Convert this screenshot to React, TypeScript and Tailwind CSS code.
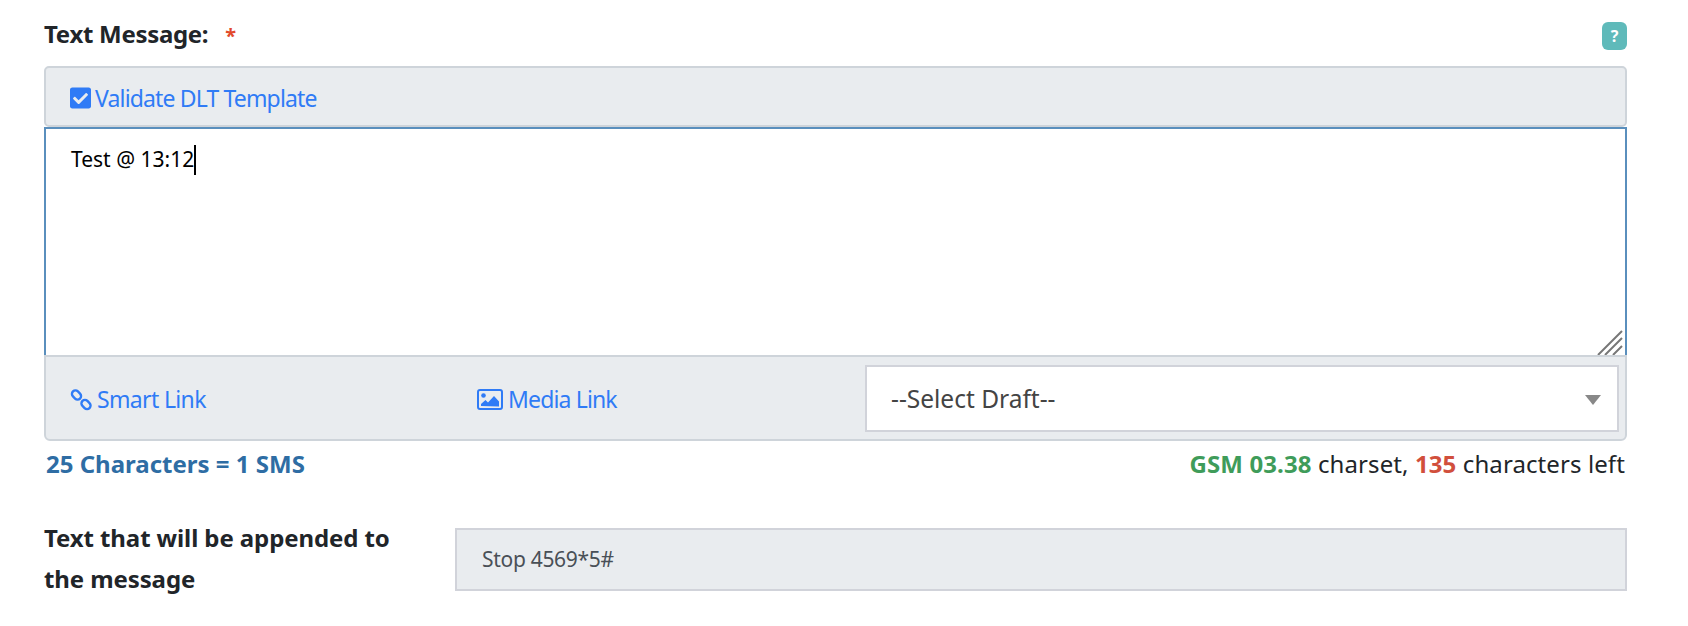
import { FaCheckSquare } from "react-icons/fa";

const App = () => {
  return (
    <div className="w-[1688px] h-[626px] overflow-hidden bg-white pl-[44px] pr-[61px] pt-[18px] font-['Noto_Sans',sans-serif] text-[23px] text-[#212529]">
      {/* label row */}
      <div className="flex items-center justify-between h-[32px] mb-[16px]">
        <label className="font-bold text-[24px] tracking-[-0.3px]">
          Text Message:<span className="ml-[17px] text-[20px] text-[#e2492b]">*</span>
        </label>
        <span className="flex items-center justify-center w-[25px] h-[28px] mt-[4px] rounded-[6px] bg-[#5fbaba] text-white text-[16px] font-bold">?</span>
      </div>

      {/* message box */}
      <div className="h-[61px] flex items-center pl-[24px] pt-[3px] bg-[#e9ecef] border-2 border-[#ced4da] rounded-[5px] text-[#2f7bf6] tracking-[-0.85px]">
        <FaCheckSquare className="w-[21px] h-[24px] mr-[4px]" />
        Validate DLT Template
      </div>
      <div className="relative h-[228px] bg-white border-2 border-b-0 border-[#5a8fbd] pl-[25px] pt-[15px] text-[21px] text-black">
        <span className="inline-flex items-center h-[30px]">
          Test @ 13:12
          <span className="inline-block w-[2px] h-[30px] bg-black" />
        </span>
        <svg className="absolute right-[2px] bottom-0 w-[26px] h-[26px]" viewBox="0 0 26 26" stroke="#777" strokeWidth="2">
          <path d="M1 26 25 2M8 26 25 9M16 26 25 17" />
        </svg>
      </div>
      <div className="h-[86px] flex items-center pl-[24px] pr-[6px] bg-[#e9ecef] border-2 border-[#ced4da] rounded-b-[6px] text-[#2f7bf6] tracking-[-0.85px]">
        <div className="w-[407px] flex items-center pt-[3px] tracking-[-0.65px]">
          <svg className="w-[24px] h-[24px] mr-[3px]" viewBox="0 0 24 24" fill="none" stroke="currentColor" strokeWidth="2.4">
            <rect x="1.5" y="3.5" width="10" height="7" rx="3.5" transform="rotate(45 6.5 7)" />
            <rect x="11" y="13" width="10" height="7" rx="3.5" transform="rotate(45 16 16.5)" />
          </svg>
          Smart Link
        </div>
        <div className="w-[388px] flex items-center pt-[3px]">
          <svg className="w-[26px] h-[21px] mr-[5px]" viewBox="0 0 26 21" fill="currentColor">
            <rect x="1" y="1" width="24" height="19" rx="2" fill="none" stroke="currentColor" strokeWidth="2" />
            <circle cx="6.5" cy="6.5" r="2.3" />
            <path d="M4 17v-2l4.5-4 2.5 2.5 6-6.5 5 5.5v5z" />
          </svg>
          Media Link
        </div>
        <div className="relative flex-1 h-[67px] flex items-center pl-[24px] pt-[2px] bg-white border-2 border-[#d1d3da] text-[24.5px] tracking-[0px] text-[#444]">
          --Select Draft--
          <span className="absolute right-[16px] top-[28px] w-0 h-0 border-x-[8px] border-x-transparent border-t-[10px] border-t-[#888]" />
        </div>
      </div>

      {/* counters */}
      <div className="flex items-center justify-between h-[46px] px-[2px] text-[24px]">
        <span className="font-bold text-[#2e6da4]">25 Characters = 1 SMS</span>
        <span className="tracking-[0.1px]">
          <span className="font-bold text-[#3f9c5a]">GSM 03.38</span> charset, <span className="font-bold text-[#d14f3c]">135</span> characters left
        </span>
      </div>

      {/* appended text */}
      <div className="flex mt-[41px]">
        <div className="w-[411px] pr-[40px] -mt-[11px] font-bold text-[24px] leading-[41px] tracking-[-0.1px]">
          Text that will be appended to the message
        </div>
        <div className="flex-1 h-[63px] flex items-center pl-[25px] bg-[#e9ecef] border-2 border-[#d1d3da] text-[21px] text-[#495057] tracking-[-0.3px]">
          Stop 4569*5#
        </div>
      </div>
    </div>
  );
};

export default App;
